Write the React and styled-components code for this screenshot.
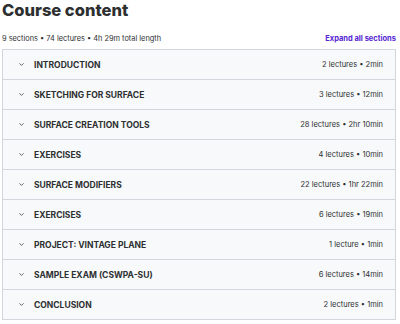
import React from "react";
import styled, { createGlobalStyle } from "styled-components";

const GlobalStyle = createGlobalStyle`
  body {
    margin: 0;
    background: #ffffff;
    font-family: Inter, "Liberation Sans", sans-serif;
    color: #2d2f31;
  }
`;

const sections = [
  { title: "INTRODUCTION", lectures: "2 lectures", length: "2min" },
  { title: "SKETCHING FOR SURFACE", lectures: "3 lectures", length: "12min" },
  { title: "SURFACE CREATION TOOLS", lectures: "28 lectures", length: "2hr 10min" },
  { title: "EXERCISES", lectures: "4 lectures", length: "10min" },
  { title: "SURFACE MODIFIERS", lectures: "22 lectures", length: "1hr 22min" },
  { title: "EXERCISES", lectures: "6 lectures", length: "19min" },
  { title: "PROJECT: VINTAGE PLANE", lectures: "1 lecture", length: "1min" },
  { title: "SAMPLE EXAM (CSWPA-SU)", lectures: "6 lectures", length: "14min" },
  { title: "CONCLUSION", lectures: "2 lectures", length: "1min" },
];

const Wrapper = styled.div`
  width: 394px;
  padding: 0 2px;
`;

const Heading = styled.h2`
  margin: 0;
  padding-top: 1px;
  font-size: 16.5px;
  font-weight: 800;
  line-height: 18px;
  color: #2d2f31;
`;

const SummaryBar = styled.div`
  display: flex;
  justify-content: space-between;
  align-items: center;
  margin-top: 12px;
  height: 14px;
  margin-bottom: 4px;
`;

const Summary = styled.span`
  font-size: 7.4px;
  color: #2d2f31;
`;

const ExpandLink = styled.button`
  border: 0;
  background: none;
  padding: 0;
  font-family: inherit;
  font-size: 7.5px;
  font-weight: 700;
  color: #5624d0;
  cursor: pointer;
`;

const List = styled.div`
  border: 1px solid #d1d7dc;
`;

const Row = styled.div`
  display: flex;
  align-items: center;
  height: 29px;
  padding: 0 12px 0 15px;
  background: #f7f9fa;
  & + & {
    border-top: 1px solid #d1d7dc;
  }
`;

const Chevron = styled.svg`
  width: 7px;
  height: 7px;
  margin-right: 9px;
  flex-shrink: 0;
`;

const Title = styled.span`
  flex: 1;
  font-size: 8.5px;
  font-weight: 700;
  color: #2d2f31;
`;

const Meta = styled.span`
  font-size: 7.5px;
  color: #2d2f31;
`;

export default function App() {
  return (
    <Wrapper>
      <GlobalStyle />
      <Heading>Course content</Heading>
      <SummaryBar>
        <Summary>9 sections • 74 lectures • 4h 29m total length</Summary>
        <ExpandLink>Expand all sections</ExpandLink>
      </SummaryBar>
      <List>
        {sections.map((s, i) => (
          <Row key={i}>
            <Chevron viewBox="0 0 24 24" fill="none" stroke="#2d2f31" strokeWidth="2.5" strokeLinecap="round" strokeLinejoin="round">
              <path d="M6 9l6 6 6-6" />
            </Chevron>
            <Title>{s.title}</Title>
            <Meta>
              {s.lectures} • {s.length}
            </Meta>
          </Row>
        ))}
      </List>
    </Wrapper>
  );
}
